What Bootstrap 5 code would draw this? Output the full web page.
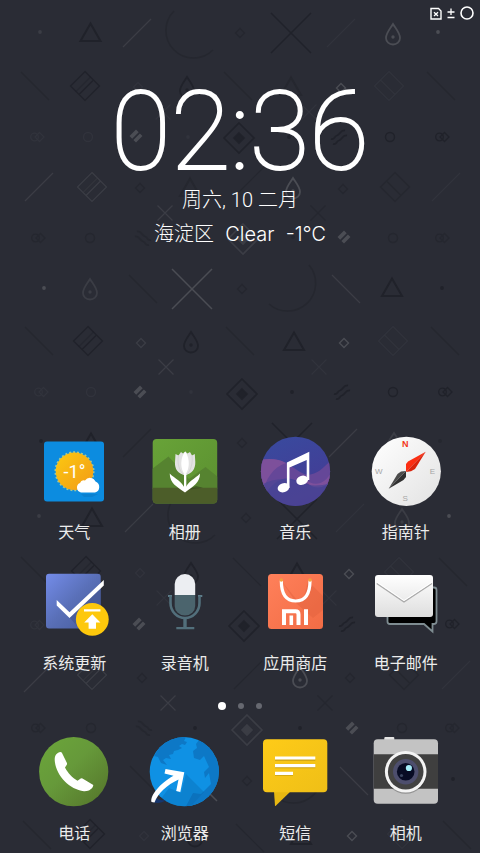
<!DOCTYPE html>
<html lang="zh-CN">
<head>
<meta charset="utf-8">
<meta name="viewport" content="width=device-width, initial-scale=1">
<title>主屏幕</title>
<link href="https://cdn.jsdelivr.net/npm/bootstrap@5.3.0/dist/css/bootstrap.min.css" rel="stylesheet">
<style>
body { background: #2a2c35; color: #fff; font-family: "Noto Sans CJK SC", "Noto Sans", sans-serif; }
.wallpaper { position: absolute; inset: 0; width: 100%; height: 100%; z-index: -1; }
.home { position: relative; z-index: 0; overflow: hidden; }
.statusbar { height: 26px; padding-right: 6px; gap: 5px; }
.clock { margin-top: 56px; font-family: Roboto, sans-serif; font-size: 109px; line-height: 100px; font-weight: 100; -webkit-text-stroke: 2px #fff; }
.date-line, .weather-line { font-family: Inter, "Noto Sans CJK SC", sans-serif; font-size: 20px; line-height: 34px; font-weight: 300; white-space: pre; }
.date-line { font-family: Roboto, "Noto Sans CJK SC", sans-serif; margin-top: 1px; }
.apps { padding: 0 19px; row-gap: 23px; }
.app { color: #ececec; font-size: 16px; line-height: 24px; gap: 12px; }
.app:hover { color: #fff; }
.app svg { width: 72px; height: 72px; overflow: visible; }
.pager { height: 62px; padding-top: 2px; gap: 12px; }
.pager button { width: 6px; height: 6px; background: #666870; }
.pager button.current { width: 8px; height: 8px; background: #fff; }
.dock { padding-bottom: 9px; }
.d1 { color: #20222a; } .d2 { color: #25272f; }
.l1 { color: #4b4d54; } .l2 { color: #3b3d45; } .l3 { color: #31333c; }
</style>
</head>
<body>
<div class="home min-vh-100 d-flex flex-column">
<svg class="wallpaper" viewBox="0 0 480 853" preserveAspectRatio="xMidYMin slice" aria-hidden="true">
  <defs>
    <g id="w-tri" fill="none" stroke="currentColor" stroke-width="2"><path d="M0-9.500L10 8H-10Z"/></g>
    <g id="w-drop" fill="none" stroke="currentColor" stroke-width="1.800"><path d="M0-10C3-5 7-1 7 4A7 6.500 0 0 1-7 4C-7-1-3-5 0-10Z"/><circle cy="3" r=".8" fill="currentColor"/></g>
    <g id="w-box" fill="none" stroke="currentColor" stroke-width="1.200"><path d="M0-14.500L14.500 0L0 14.500L-14.500 0ZM-6 8.500L8.500-6"/><path opacity=".45" d="M-9 5.500L5.500-9"/></g>
    <g id="w-boxb" fill="none" stroke="currentColor" stroke-width="1.200"><path d="M0-14.500L14.500 0L0 14.500L-14.500 0ZM-8.500-6L6 8.500"/></g>
    <g id="w-big" stroke="currentColor" stroke-width="1.500"><path d="M-20-20L20 20M20-20L-20 20"/></g>
    <g id="w-x" stroke="currentColor" stroke-width="1.300"><path d="M-7.500-7.500L7.500 7.500M7.500-7.500L-7.500 7.500"/></g>
    <g id="w-up" stroke="currentColor" stroke-width="1.200"><path d="M-14 14L14-14"/></g>
    <g id="w-dn" stroke="currentColor" stroke-width="1.200"><path d="M-14-14L14 14"/></g>
    <g id="w-arc" fill="none" stroke="currentColor" stroke-width="1.500"><path d="M-19-20A27.500 27.500 0 0 0 20 19"/></g>
    <g id="w-arcb" fill="none" stroke="currentColor" stroke-width="1.500"><path d="M19-21A28 28 0 0 1-21 18"/></g>
    <g id="w-sd" fill="none" stroke="currentColor" stroke-width="1.400"><path d="M0-4.500L4.500 0L0 4.500L-4.500 0Z"/></g>
    <g id="w-dot" fill="currentColor"><circle r="1.900"/></g>
    <g id="w-ring" fill="none" stroke="currentColor" stroke-width="1.400"><circle r="4.500"/></g>
    <g id="w-pair" fill="none" stroke="currentColor" stroke-width="1.300"><circle cx="-2.500" r="3.800"/><path d="M2.500-4.500L7 0L2.500 4.500L-2 0Z"/></g>
    <g id="w-solid" fill="currentColor"><path d="M-6.500 0L0-6.500L2.700-3.800L-3.800 2.700ZM-2.600 3.900L3.900-2.600L6.500 0L0 6.500Z"/></g>
    <g id="w-nest" fill="none" stroke="currentColor" stroke-width="1.600"><path d="M0-15L15 0L0 15L-15 0Z"/><path fill="currentColor" d="M0-5L5 0L0 5L-5 0Z"/></g>
    <g id="w-wave" fill="none" stroke="currentColor" stroke-width="1.700"><path d="M-8 2C-4 3-5-1-2-1.500S1-7 6-6.500M-6 7C-2 8-3 4 0 3.500S3-2 8-1.500"/></g>
    <g id="w-waveb" fill="none" stroke="currentColor" stroke-width="1.700"><path d="M8 2C4 3 5-1 2-1.500S-1-7-6-6.500M6 7C2 8 3 4 0 3.500S-3-2-8-1.500"/></g>
  </defs>
  <g class="d1">
    <use href="#w-tri" x="90.500" y="33"/><use href="#w-big" x="291" y="33"/><use href="#w-box" x="85" y="86"/><use href="#w-drop" x="187" y="87"/>
    <use href="#w-nest" x="239" y="138"/><use href="#w-dot" x="289" y="137"/><use href="#w-wave" x="339" y="137"/><use href="#w-ring" x="390" y="137"/><use href="#w-pair" x="442" y="137"/>
    <use href="#w-tri" x="392" y="288"/><use href="#w-dot" x="442" y="288"/><use href="#w-box" x="88" y="341"/><use href="#w-drop" x="191" y="342"/><use href="#w-tri" x="294" y="342"/>
    <use href="#w-nest" x="242" y="394"/><use href="#w-dot" x="292" y="392"/><use href="#w-wave" x="342" y="392"/><use href="#w-ring" x="393" y="392"/><use href="#w-pair" x="445" y="392"/>
    <use href="#w-dot" x="41" y="441"/><use href="#w-tri" x="91" y="443"/><use href="#w-big" x="292" y="443"/>
    <use href="#w-tri" x="92" y="518"/><use href="#w-big" x="297" y="519"/><use href="#w-box" x="86" y="571"/><use href="#w-drop" x="191" y="573"/><use href="#w-tri" x="297" y="573"/>
    <use href="#w-nest" x="244" y="626"/><use href="#w-wave" x="347" y="624"/><use href="#w-pair" x="452" y="624"/>
    <use href="#w-dot" x="195" y="728"/><use href="#w-dot" x="300" y="728"/><use href="#w-dot" x="453" y="779"/><use href="#w-box" x="90" y="834"/><use href="#w-drop" x="195" y="836"/><use href="#w-tri" x="301" y="836"/>
  </g>
  <g class="d2">
    <use href="#w-arc" x="193" y="31"/><use href="#w-sd" x="240" y="33"/><use href="#w-dn" x="35" y="86"/><use href="#w-dn" x="238" y="86"/><use href="#w-tri" x="291" y="87"/><use href="#w-dn" x="441" y="86"/>
    <use href="#w-sd" x="140" y="188"/><use href="#w-tri" x="190" y="188"/><use href="#w-up" x="250" y="181"/><use href="#w-sd" x="343" y="189"/><use href="#w-boxb" x="395" y="187"/><use href="#w-x" x="318" y="213"/>
    <use href="#w-pair" x="38" y="238"/><use href="#w-ring" x="90" y="238"/><use href="#w-waveb" x="143" y="238"/><use href="#w-dot" x="293" y="237"/><use href="#w-ring" x="393" y="238"/><use href="#w-pair" x="442" y="238"/>
    <use href="#w-dn" x="143" y="289"/><use href="#w-sd" x="242" y="289"/><use href="#w-arcb" x="290" y="286"/><use href="#w-dn" x="39" y="341"/><use href="#w-dn" x="240" y="341"/><use href="#w-dn" x="445" y="341"/>
    <use href="#w-up" x="137" y="443"/><use href="#w-sd" x="242" y="443"/><use href="#w-dot" x="440" y="441"/><use href="#w-arc" x="195" y="516"/><use href="#w-sd" x="246" y="518"/>
    <use href="#w-dn" x="35" y="571"/><use href="#w-dn" x="247" y="572"/><use href="#w-dn" x="453" y="572"/><use href="#w-sd" x="142" y="678"/><use href="#w-up" x="248" y="675"/><use href="#w-sd" x="350" y="678"/><use href="#w-boxb" x="404" y="675"/><use href="#w-x" x="325" y="703"/>
    <use href="#w-pair" x="38" y="728"/><use href="#w-ring" x="91" y="728"/><use href="#w-waveb" x="144" y="728"/><use href="#w-ring" x="402" y="728"/><use href="#w-pair" x="452" y="728"/>
    <use href="#w-dn" x="144" y="780"/><use href="#w-sd" x="247" y="781"/><use href="#w-arcb" x="296" y="778"/><use href="#w-dn" x="37" y="835"/><use href="#w-dn" x="250" y="838"/><use href="#w-dn" x="457" y="835"/>
  </g>
  <g class="l1">
    <use href="#w-drop" x="393" y="34"/><use href="#w-dot" x="438" y="32"/><use href="#w-sd" x="341" y="88"/><use href="#w-solid" x="136" y="136"/><use href="#w-drop" x="293" y="188"/>
    <use href="#w-solid" x="344" y="237"/><use href="#w-dot" x="44" y="288"/><use href="#w-big" x="192" y="289"/><use href="#w-sd" x="344" y="343"/><use href="#w-solid" x="140" y="392"/>
    <use href="#w-dot" x="449" y="516"/><use href="#w-sd" x="349" y="574"/><use href="#w-solid" x="139" y="624"/><use href="#w-drop" x="300" y="677"/><use href="#w-solid" x="352" y="728"/><use href="#w-big" x="197" y="781"/><use href="#w-sd" x="352" y="836"/>
  </g>
  <g class="l2">
    <use href="#w-dot" x="40" y="32"/><use href="#w-up" x="137" y="33"/><use href="#w-up" x="39" y="187"/><use href="#w-box" x="92" y="187"/><use href="#w-x" x="165" y="213"/><use href="#w-nest" x="243" y="239"/>
    <use href="#w-drop" x="90" y="289"/><use href="#w-x" x="166" y="367"/><use href="#w-sd" x="141" y="343"/><use href="#w-dn" x="346" y="289"/><use href="#w-drop" x="394" y="443"/><use href="#w-up" x="343" y="443"/><use href="#w-dot" x="39" y="516"/><use href="#w-up" x="139" y="518"/><use href="#w-drop" x="402" y="519"/>
    <use href="#w-box" x="92" y="675"/><use href="#w-up" x="38" y="678"/><use href="#w-x" x="168" y="703"/><use href="#w-nest" x="247" y="730"/><use href="#w-dn" x="354" y="781"/>
  </g>
  <g class="l3">
    <use href="#w-up" x="341" y="33"/><use href="#w-sd" x="138" y="87"/><use href="#w-boxb" x="389" y="86"/><use href="#w-x" x="163" y="112"/><use href="#w-x" x="309" y="112"/><use href="#w-pair" x="37" y="137"/><use href="#w-ring" x="88" y="137"/><use href="#w-dot" x="188" y="137"/>
    <use href="#w-up" x="446" y="187"/><use href="#w-boxb" x="393" y="341"/><use href="#w-x" x="319" y="367"/><use href="#w-pair" x="41" y="392"/><use href="#w-ring" x="91" y="392"/><use href="#w-dot" x="191" y="392"/><use href="#w-up" x="350" y="518"/>
    <use href="#w-sd" x="140" y="573"/><use href="#w-boxb" x="399" y="572"/><use href="#w-x" x="164" y="598"/><use href="#w-x" x="329" y="598"/><use href="#w-pair" x="37" y="625"/><use href="#w-up" x="456" y="675"/><use href="#w-sd" x="144" y="836"/><use href="#w-boxb" x="402" y="834"/>
  </g>
</svg>

<header class="statusbar d-flex align-items-center justify-content-end">
  <svg width="12" height="14" viewBox="0 0 12 14" role="img" aria-label="无 SIM 卡"><path d="M1 2.500H8.500L11 5V13H1Z" fill="none" stroke="#fff" stroke-width="1.400"/><path d="M4 6.200L8 10M8 6.200L4 10" stroke="#fff" stroke-width="1.300"/></svg>
  <svg width="8" height="14" viewBox="0 0 8 14" aria-hidden="true"><path d="M.5 6H7.500M4 2.500V9M.5 11.500H7.500" stroke="#fff" stroke-width="1.300"/></svg>
  <svg width="14" height="14" viewBox="0 0 14 14" role="img" aria-label="电量"><circle cx="7" cy="7" r="6" fill="none" stroke="#fff" stroke-width="1.600"/></svg>
</header>

<section class="text-center">
  <time class="clock d-block" datetime="02:36">02:36</time>
  <div class="date-line">周六, 10 二月</div>
  <div class="weather-line">海淀区  Clear  -1℃</div>
</section>

<main class="mt-auto">
  <nav class="apps row row-cols-4 g-0" aria-label="应用">
    <a href="#" class="app col d-flex flex-column align-items-center text-decoration-none">
      <svg viewBox="0 0 72 72" aria-hidden="true">
        <defs><linearGradient id="g-sun" x2="1" y2="1"><stop stop-color="#fcc911"/><stop offset="1" stop-color="#f29a16"/></linearGradient></defs>
        <rect x="6" y="6.500" width="60" height="60" rx="3" fill="#0c8ce0"/>
        <circle cx="36.500" cy="36.300" r="19" fill="none" stroke="#9fc89b" stroke-width="2" stroke-dasharray="2 1.980"/>
        <circle cx="36.500" cy="36.300" r="18.800" fill="url(#g-sun)"/>
        <text x="36.500" y="42.500" text-anchor="middle" fill="#fff" font-size="18" font-weight="400" font-family="Roboto, sans-serif">-1°</text>
        <path d="M43 59H60L54 62H46Z" fill="#075f9f" opacity=".25"/>
        <path d="M43 57.500A5 5 0 0 1 42 48A4 4 0 0 1 47 45.500A6 6 0 0 1 57.500 46.500A5.800 5.800 0 0 1 57 57.500Z" fill="#fff"/>
      </svg><span>天气</span></a>
    <a href="#" class="app col d-flex flex-column align-items-center text-decoration-none">
      <svg viewBox="0 0 72 72" aria-hidden="true">
        <defs><linearGradient id="g-gal" x2="1" y2="1"><stop stop-color="#68a338"/><stop offset="1" stop-color="#5b8f30"/></linearGradient><clipPath id="c-gal"><rect x="3.700" y="4" width="64.500" height="64.500" rx="4"/></clipPath></defs>
        <g clip-path="url(#c-gal)"><path d="M3 4H69V69H3Z" fill="url(#g-gal)"/><path d="M3 34L19.500 21.500L40 44L56.500 32L69 42V54H3Z" fill="#568330"/><path d="M3 52.700H69V69H3Z" fill="#4c5d29"/></g>
        <path d="M37 55L54 52.700L47 51Z" fill="#34481c" opacity=".6"/>
        <path d="M36 40C29 39 25.500 34 26 27L26.500 19L29.500 20.500L32 17L34 18.500L36.200 16.500L38.500 18.500L41 17L43 20.500L45.800 19L46.300 27C46.500 34 43 39 36 40Z" fill="#e3e3e3"/>
        <path d="M36.200 16.500C31 23 31 34 36 40C41 34 41 23 36.200 16.500Z" fill="#fff"/><path d="M29.500 20.500C28 28 30 36 35 40M43 20.500C44 28 42 36 37 40" fill="none" stroke="#d6d6d6"/>
        <path d="M35 39H37.300V55H35Z" fill="#fff"/><path d="M20.700 38.500C26 44 33 46 36 54C39 46 46 44 51 38.500C51 48 44 51 36 57.500C28 51.500 21 49 20.700 38.500Z" fill="#fff"/>
      </svg><span>相册</span></a>
    <a href="#" class="app col d-flex flex-column align-items-center text-decoration-none">
      <svg viewBox="0 0 72 72" aria-hidden="true">
        <defs><clipPath id="c-mus"><circle cx="36.500" cy="36.300" r="34.600"/></clipPath><linearGradient id="g-mus" x2=".4" y2="1"><stop stop-color="#384b9f"/><stop offset="1" stop-color="#443b94"/></linearGradient></defs>
        <g clip-path="url(#c-mus)"><path d="M0 0H72V72H0Z" fill="url(#g-mus)"/><path d="M0 25C16 22 25 25 38 35S60 38 73 24V50C60 52 50 50 40 47C28 40 15 43 5 62L0 60Z" fill="#654798"/><path d="M0 25C12 23 20 24 27 28C14 32 6 45 4 58L0 58ZM45 44C57 53 66 48 72 38V43C66 56 52 55 45 44Z" fill="#7d509b"/><path d="M2 50C14 43 28 42 40 47S60 51 73 48V72H0Z" fill="#4c4594" opacity=".75"/></g>
        <g fill="#fff"><ellipse cx="24.500" cy="52.700" rx="6" ry="4.500" transform="rotate(-18 24.500 52.700)"/><ellipse cx="43.200" cy="45.300" rx="6" ry="4.500" transform="rotate(-18 43.200 45.300)"/><path d="M27.900 27.500L50.300 16.700V45H47.700V25L30.500 32.500V53H27.900Z"/></g>
      </svg><span>音乐</span></a>
    <a href="#" class="app col d-flex flex-column align-items-center text-decoration-none">
      <svg viewBox="0 0 72 72" aria-hidden="true" font-family="Liberation Sans, sans-serif" text-anchor="middle">
        <defs><linearGradient id="g-com" x2="1" y2="1"><stop stop-color="#fff"/><stop offset="1" stop-color="#e2e2e2"/></linearGradient></defs>
        <circle cx="36.300" cy="36.300" r="34.600" fill="url(#g-com)"/>
        <text x="35.200" y="12.300" font-size="9" font-weight="700" fill="#f3361b">N</text><g font-size="8" fill="#a5a5a5"><text x="8.700" y="39">W</text><text x="62.500" y="39">E</text><text x="35.200" y="65.500">S</text></g>
        <path d="M36 37V29L38 26.500L55.700 16.700Z" fill="#fb2e12"/><path d="M36 37L41 36.300L45 34L55.700 16.700Z" fill="#d9230c"/>
        <path d="M36 36L31 36.500L27.500 39L18.700 53.700Z" fill="#4b4b4b"/><path d="M36 36V42L33.500 45L18.700 53.700Z" fill="#303030"/>
      </svg><span>指南针</span></a>
    <a href="#" class="app col d-flex flex-column align-items-center text-decoration-none">
      <svg viewBox="0 0 72 72" aria-hidden="true">
        <defs><linearGradient id="g-upd" x2="1" y2="1"><stop stop-color="#748ce9"/><stop offset=".5" stop-color="#596fb7"/><stop offset="1" stop-color="#455b9a"/></linearGradient></defs>
        <rect x="8" y="7.700" width="54.700" height="54.700" rx="3" fill="url(#g-upd)"/>
        <path d="M31.500 51.500L62.700 22V45L45 62.300H41Z" fill="#3f5088" opacity=".5"/>
        <path d="M18.700 34L31.500 46.300L65.800 14V19.500L31.500 52L18.700 39.500Z" fill="#fff"/>
        <circle cx="54.300" cy="53.300" r="16.400" fill="#fdc80c"/><path d="M46 43.200H62.400V45.400H46ZM54.300 48.300L62.400 56.500H58V62.700H50.600V56.500H46.200Z" fill="#fff"/>
      </svg><span>系统更新</span></a>
    <a href="#" class="app col d-flex flex-column align-items-center text-decoration-none">
      <svg viewBox="0 0 72 72" aria-hidden="true">
        <path d="M25.700 29V18A10.200 10 0 0 1 46.200 18V29Z" fill="#eceef2"/><path d="M25.700 29H46.200V40A10.200 9.500 0 0 1 25.700 40Z" fill="#4b646d"/>
        <path d="M19 30H23M49 30H53.300" stroke="#5d7c89" stroke-width="2.200"/><path d="M21.500 30V37A14.500 15 0 0 0 50.500 37V30" fill="none" stroke="#526f7b" stroke-width="2.600"/><path d="M34.300 52H37.700V61H45.300V63.200H27.300V61H34.300Z" fill="#526f7b"/>
      </svg><span>录音机</span></a>
    <a href="#" class="app col d-flex flex-column align-items-center text-decoration-none">
      <svg viewBox="0 0 72 72" aria-hidden="true">
        <defs><linearGradient id="g-sto" x2="1" y2="1"><stop stop-color="#ff805a"/><stop offset="1" stop-color="#f16c45"/></linearGradient></defs>
        <rect x="9" y="8" width="55" height="55" rx="3.500" fill="url(#g-sto)"/><path d="M22.500 15L38 34L45 31L49 15L64 30V44L54 52L38 38Z" fill="#d95c38" opacity=".35"/>
        <path d="M22.300 14.500C22.300 28 27.500 35 36.700 35S51 28 51 14.500" fill="none" stroke="#fff" stroke-width="3.200"/><circle cx="22.300" cy="14" r="1.800" fill="#f2a13f"/><circle cx="51" cy="14" r="1.800" fill="#f2a13f"/>
        <g fill="none" stroke="#fff" stroke-width="4"><path d="M25 59V45.300H36.500Q39.500 45.300 39.500 48.500V59M47 43.300V59"/><path stroke-width="3.600" d="M32.300 49.500V59"/></g>
      </svg><span>应用商店</span></a>
    <a href="#" class="app col d-flex flex-column align-items-center text-decoration-none">
      <svg viewBox="0 0 72 72" aria-hidden="true">
        <defs><linearGradient id="g-mail" x2="0" y2="1"><stop stop-color="#fff"/><stop offset="1" stop-color="#dedede"/></linearGradient></defs>
        <path d="M60 21.500H64Q66.500 21.500 66.500 24V55.500Q66.500 58 63.500 58H62.500V65.500L54 58H20Q17.500 58 17.500 55.500V48" fill="#000" stroke="#7e8c91" stroke-width="1.800"/>
        <rect x="5" y="9" width="58" height="42" rx="3" fill="url(#g-mail)"/><path d="M6.700 17.500L34 36L62 17.500" fill="none" stroke="#aaa" stroke-width="1.200"/><path d="M7 16L34 34.500L62 16" fill="none" stroke="#fff" stroke-width="1"/>
      </svg><span>电子邮件</span></a>
  </nav>

  <div class="pager d-flex align-items-center justify-content-center">
    <button type="button" class="current border-0 rounded-circle p-0" aria-label="第 1 页"></button>
    <button type="button" class="border-0 rounded-circle p-0" aria-label="第 2 页"></button>
    <button type="button" class="border-0 rounded-circle p-0" aria-label="第 3 页"></button>
  </div>

  <nav class="apps dock row row-cols-4 g-0" aria-label="快捷栏">
    <a href="#" class="app col d-flex flex-column align-items-center text-decoration-none">
      <svg viewBox="0 0 72 72" aria-hidden="true">
        <defs><linearGradient id="g-pho" x2="1" y2="1"><stop stop-color="#6ba63a"/><stop offset=".45" stop-color="#66993a"/><stop offset="1" stop-color="#54732a"/></linearGradient></defs>
        <circle cx="35.700" cy="35.700" r="34.600" fill="url(#g-pho)"/>
        <path d="M22.500 16C19 16.500 16.600 19 16.700 24C17.500 39 31 53.500 46 55.200C51 55.500 55 52.500 55.300 49L44.500 42.500Q43 42 42 43L39.500 44.700C34.500 42 29.500 36.500 27 31.500L28.800 28.800Q29.300 27.800 28.800 26.800L24 17Q23.500 16 22.500 16Z" fill="#fff"/>
      </svg><span>电话</span></a>
    <a href="#" class="app col d-flex flex-column align-items-center text-decoration-none">
      <svg viewBox="0 0 72 72" aria-hidden="true">
        <defs><clipPath id="c-web"><circle cx="35.300" cy="35.700" r="34.600"/></clipPath></defs>
        <g clip-path="url(#c-web)"><path d="M0 0H72V72H0Z" fill="#0f91e4"/><path d="M37 1L35 5L38 6L36 9L33 8L30 10L33 12L29 14L25 15L24 18L20 19L22 23L17 22L14 24L18 29L12 27L9 21L5 20L14 6L30 0ZM50 4L47 8L48 12L44 15L45 22L51 24L55 20L60 31L55 36L56 42L60 37L62 48L52 58L44 57L36 72H72V0Z" fill="#0d78c6"/><path d="M37 38L55 56L40 72H5L20 52L32 57Z" fill="#0968ad" opacity=".35"/></g>
        <path d="M3 65.500C7 68 13 67 17 64C11 65 8 63 6 60Z" fill="#17366d"/>
        <path d="M16.500 33L35.300 36.300L31.300 56L27.200 55L29.500 43.500C18 49 9 57 5.500 66.500L2.500 66C1 60 10 48 24.500 39.800L15.500 37.500Z" fill="#fff"/>
      </svg><span>浏览器</span></a>
    <a href="#" class="app col d-flex flex-column align-items-center text-decoration-none">
      <svg viewBox="0 0 72 72" aria-hidden="true">
        <defs><linearGradient id="g-sms" x2="1" y2="1"><stop stop-color="#fecb18"/><stop offset="1" stop-color="#efbf17"/></linearGradient></defs>
        <path d="M15 55H32L16.500 70H16Z" fill="#e8b812"/><rect x="4" y="3.300" width="64.300" height="53" rx="4" fill="url(#g-sms)"/>
        <path d="M16 24H56.300M16 31.500H56.300M16 39H34" stroke="#caa012" stroke-width="1.500"/><path d="M16 22H56.300M16 29.700H56.300M16 37.300H34" stroke="#fff" stroke-width="3.200"/>
      </svg><span>短信</span></a>
    <a href="#" class="app col d-flex flex-column align-items-center text-decoration-none">
      <svg viewBox="0 0 72 72" aria-hidden="true">
        <rect x="14.300" y="1" width="10" height="5" rx="1" fill="#e4e4e4"/><rect x="3.700" y="3.300" width="64.300" height="64.500" rx="4" fill="#c3c3c3"/><path d="M3.700 18.300H68V52.700H3.700Z" fill="#3f3f3f"/>
        <circle cx="35.700" cy="37" r="20.800" fill="#222" opacity=".3"/><circle cx="35.700" cy="35.700" r="20.800" fill="#f4f4f4"/><circle cx="35.700" cy="35.700" r="17.800" fill="#424242"/><circle cx="35.700" cy="35.700" r="12.700" fill="#4d4e6d"/><circle cx="35.700" cy="35.700" r="8.800" fill="#080c24"/><circle cx="38.900" cy="32" r="3.100" fill="#a6edf8"/><circle cx="31.500" cy="39.500" r="1.600" fill="#3a4660"/>
      </svg><span>相机</span></a>
  </nav>
</main>
</div>
<script src="https://cdn.jsdelivr.net/npm/bootstrap@5.3.0/dist/js/bootstrap.bundle.min.js"></script>
</body>
</html>
